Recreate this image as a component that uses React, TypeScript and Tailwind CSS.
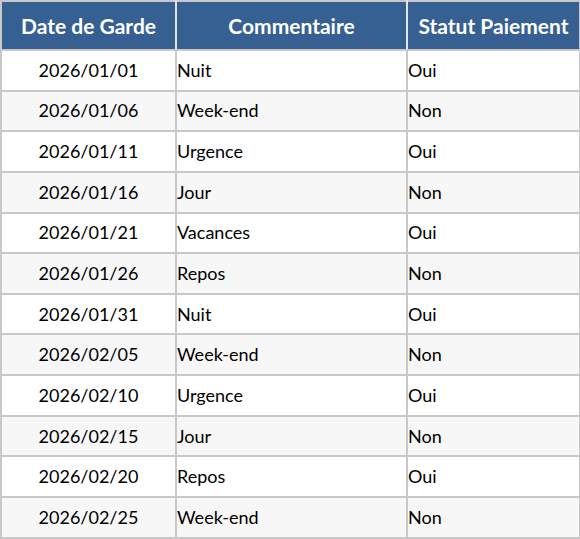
import React from 'react';

const ROWS: [string, string, string][] = [
  ['2026/01/01', 'Nuit', 'Oui'],
  ['2026/01/06', 'Week-end', 'Non'],
  ['2026/01/11', 'Urgence', 'Oui'],
  ['2026/01/16', 'Jour', 'Non'],
  ['2026/01/21', 'Vacances', 'Oui'],
  ['2026/01/26', 'Repos', 'Non'],
  ['2026/01/31', 'Nuit', 'Oui'],
  ['2026/02/05', 'Week-end', 'Non'],
  ['2026/02/10', 'Urgence', 'Oui'],
  ['2026/02/15', 'Jour', 'Non'],
  ['2026/02/20', 'Repos', 'Oui'],
  ['2026/02/25', 'Week-end', 'Non'],
];

export default function App() {
  return (
    <div className="w-[580px] bg-white font-['Lato','Liberation_Sans',sans-serif]">
      <table className="w-[579px] table-fixed border-collapse">
        <colgroup>
          <col className="w-[175px]" />
          <col className="w-[231px]" />
          <col className="w-[173px]" />
        </colgroup>
        <thead>
          <tr className="h-[49px] bg-[#366092] text-white text-[21px] font-bold">
            <th className="border-2 border-[#c8c8c8] border-r-[#dfe6ef] text-center">Date de Garde</th>
            <th className="border-2 border-[#c8c8c8] border-x-[#dfe6ef] text-center">Commentaire</th>
            <th className="border-2 border-[#c8c8c8] border-l-[#dfe6ef] text-center">Statut Paiement</th>
          </tr>
        </thead>
        <tbody>
          {ROWS.map(([date, comment, status], i) => (
            <tr key={date} className={`h-[40.65px] text-[18px] text-black ${i % 2 === 1 ? 'bg-[#f7f7f7]' : 'bg-white'}`}>
              <td className="border-2 border-[#c8c8c8] text-center">{date}</td>
              <td className="border-2 border-[#c8c8c8] pl-0">{comment}</td>
              <td className="border-2 border-[#c8c8c8] pl-0">{status}</td>
            </tr>
          ))}
        </tbody>
      </table>
    </div>
  );
}
